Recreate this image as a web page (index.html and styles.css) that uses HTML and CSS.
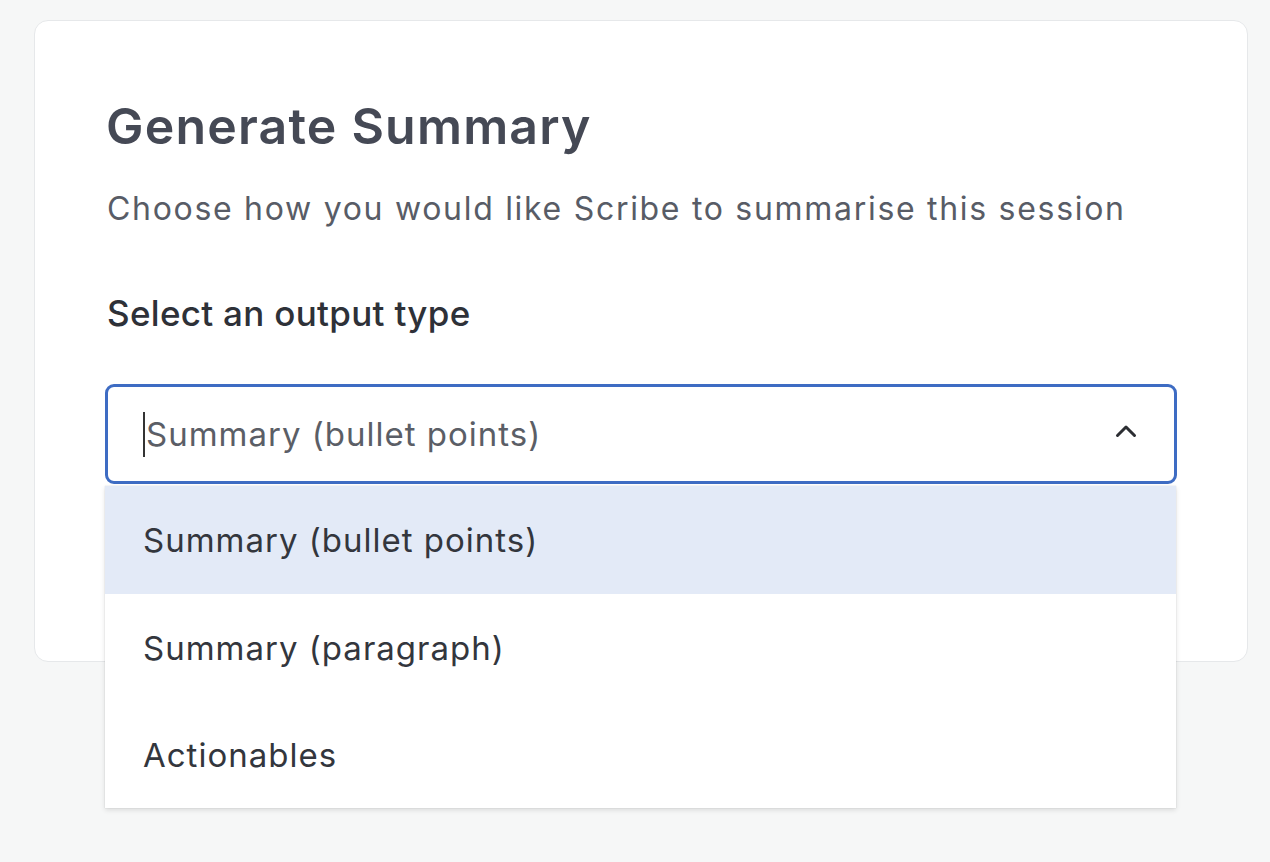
FILE: index.html
```html
<!DOCTYPE html>
<html>
<head>
<meta charset="utf-8">
<link rel="stylesheet" href="styles.css">
</head>
<body>
<div class="page">
  <div class="card">
    <h1 class="title">Generate Summary</h1>
    <p class="subtitle">Choose how you would like Scribe to summarise this session</p>
    <div class="label">Select an output type</div>
    <div class="select-wrap">
      <div class="select">
        <span class="caret"></span><span class="value">Summary (bullet points)</span>
        <svg class="chev" width="22" height="14" viewBox="0 0 22 14"><path d="M2.5 11.5 L11 3 L19.5 11.5" fill="none" stroke="#2c2e33" stroke-width="3" stroke-linecap="round" stroke-linejoin="round"/></svg>
      </div>
      <div class="menu">
        <div class="option active">Summary (bullet points)</div>
        <div class="option">Summary (paragraph)</div>
        <div class="option">Actionables</div>
      </div>
    </div>
  </div>
</div>
</body>
</html>
```
FILE: styles.css
```css
html, body { margin: 0; padding: 0; }
body {
  background: #f6f7f7;
  font-family: Inter, "Noto Sans", sans-serif;
  width: 1270px;
  height: 862px;
  overflow: hidden;
}
.page { padding: 20px 22px 0 34px; }
.card {
  background: #ffffff;
  border: 1px solid #e6e8ea;
  border-radius: 14px;
  height: 642px;
  padding: 0 70px 0 70px;
  box-sizing: border-box;
}
.title {
  margin: 0 0 0 1px;
  padding-top: 75px;
  font-size: 50px;
  font-weight: 600;
  color: #454955;
  line-height: 60px;
  letter-spacing: 1.2px;
}
.subtitle {
  margin: 33px 0 0 2px;
  font-size: 32px;
  line-height: 40px;
  color: #585c66;
  font-weight: 400;
  letter-spacing: 1.7px;
}
.label {
  margin: 62px 0 0 2px;
  font-size: 35px;
  line-height: 44px;
  font-weight: 500;
  color: #2e3138;
  letter-spacing: 0.3px;
}
.select-wrap { position: relative; margin-top: 49px; }
.select {
  height: 100px;
  box-sizing: border-box;
  border: 3px solid #3e6cc3;
  border-radius: 9px;
  display: flex;
  align-items: center;
  padding: 0 37px 4px 35px;
  background: #fff;
}
.caret { width: 2px; height: 45px; background: #333; margin: 4px 1px 0 0; }
.value { flex: 1; font-size: 33px; color: #5b5e66; letter-spacing: 1px; padding-top: 4px; }
.chev { width: 22px; height: 14px; margin-bottom: 2px; }
.menu {
  position: absolute;
  left: 0; right: 1px;
  top: 102px;
  background: #fff;
  box-shadow: 0 2px 5px rgba(0,0,0,0.12), 0 0 1px rgba(0,0,0,0.18);
}
.option {
  height: 107px;
  display: flex;
  align-items: center;
  padding-left: 38px;
  font-size: 33px;
  color: #33363d;
  letter-spacing: 1px;
}
.option.active { background: #e3eaf7; height: 108px; }
```
